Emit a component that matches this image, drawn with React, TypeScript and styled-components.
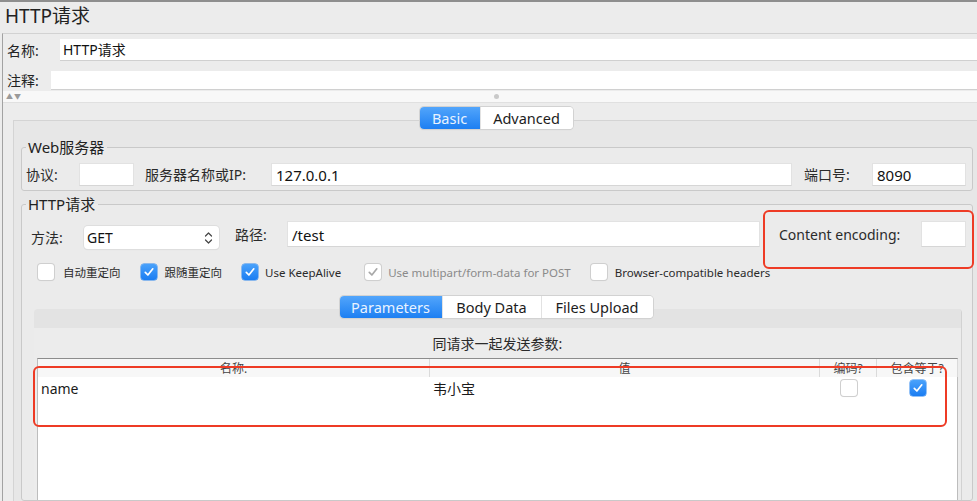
import React from "react";
import styled, { createGlobalStyle } from "styled-components";

const Global = createGlobalStyle`
  html, body { margin: 0; padding: 0; background: #ececec; }
  * { box-sizing: border-box; }
`;

const FONT = `"Noto Sans", "Noto Sans CJK SC", sans-serif`;

const Window = styled.div`
  position: relative;
  width: 977px;
  height: 501px;
  overflow: hidden;
  background: #ececec;
  border-top: 2px solid #8e8e8e;
  font-family: ${FONT};
  color: #1e1e1e;
  display: flex;
  flex-direction: column;
`;

const Title = styled.div`
  height: 31px;
  line-height: 29px;
  padding-left: 5px;
  font-size: 19px;
  color: #222;
`;

const Body = styled.div`
  flex: 1;
  margin-left: 2px;
  border-left: 1px solid #a2a2a2;
  border-top: 1px solid #d2d2d2;
  display: flex;
  flex-direction: column;
  min-height: 0;
`;

const FieldRow = styled.div<{ $pt: number }>`
  display: flex;
  align-items: center;
  padding: ${(p) => p.$pt}px 0 0 4px;
`;

const TopLabel = styled.span<{ $w: number }>`
  width: ${(p) => p.$w}px;
  flex: none;
  font-size: 14px;
  color: #222;
`;

const WideInput = styled.div<{ $h: number }>`
  flex: 1;
  height: ${(p) => p.$h}px;
  background: #fff;
  border-bottom: 1px solid #d0d0d0;
  font-size: 14px;
  line-height: ${(p) => p.$h - 1}px;
  padding-left: 3px;
  color: #111;
`;

const Splitter = styled.div`
  position: relative;
  height: 12px;
  margin-top: 1px;
  background: #f8f8f8;
  border-bottom: 1px solid #e0e0e0;
  display: flex;
  align-items: center;
  justify-content: center;
`;

const Arrows = styled.span`
  position: absolute;
  left: 3px;
  top: 0;
  font-size: 7px;
  line-height: 12px;
  color: #9a9a9a;
  letter-spacing: 1px;
`;

const Dot = styled.span`
  width: 5px;
  height: 5px;
  border-radius: 50%;
  background: #c9c9c9;
  margin-left: 12px;
`;

const TabArea = styled.div<{ $h: number; $pt: number }>`
  height: ${(p) => p.$h}px;
  padding-top: ${(p) => p.$pt}px;
  display: flex;
  justify-content: center;
`;

const Segmented = styled.div<{ $shift: number }>`
  position: relative;
  z-index: 2;
  display: flex;
  height: 22px;
  margin-left: ${(p) => p.$shift}px;
  border-radius: 4px;
  background: #fff;
  box-shadow: 0 0 0 1px #d2d2d2, 0 1px 1px rgba(0, 0, 0, 0.12);
  overflow: hidden;
`;

const Segment = styled.div<{ $w: number; $on?: boolean }>`
  width: ${(p) => p.$w}px;
  display: flex;
  align-items: center;
  justify-content: center;
  font-size: 14.5px;
  color: ${(p) => (p.$on ? "#e9f3ff" : "#1c1c1c")};
  background: ${(p) => (p.$on ? "linear-gradient(#52a5fb, #1d7ff2)" : "#fff")};
  border-right: 1px solid #e2e2e2;
  &:last-child { border-right: none; }
`;

const Panel = styled.div`
  flex: 1;
  margin-left: 10px;
  background: #e7e7e7;
  border-top: 1px solid #d4d4d4;
  border-left: 1px solid #d4d4d4;
  padding: 18px 4px 0 7px;
  display: flex;
  flex-direction: column;
  min-height: 0;
`;

const Group = styled.fieldset<{ $grow?: boolean; $mt: number }>`
  margin: ${(p) => p.$mt}px 0 0 0;
  padding: 0;
  border: 1px solid #c9c9c9;
  border-radius: 3px;
  background: #ebebeb;
  min-width: 0;
  display: flex;
  flex-direction: column;
  ${(p) => (p.$grow ? "flex: 1;" : "")}
`;

const Legend = styled.legend`
  font-size: 15px;
  line-height: 16px;
  padding: 0 3px 0 2px;
  margin-left: 4px;
  color: #222;
`;

const Row = styled.div<{ $pl: number; $pt: number; $pb?: number }>`
  display: flex;
  align-items: flex-start;
  padding: ${(p) => p.$pt}px 6px ${(p) => p.$pb ?? 0}px ${(p) => p.$pl}px;
`;

const Label = styled.span<{ $w: number; $h: number }>`
  flex: none;
  width: ${(p) => p.$w}px;
  height: ${(p) => p.$h}px;
  line-height: ${(p) => p.$h}px;
  font-size: 14px;
  color: #2a2a2a;
  white-space: nowrap;
`;

const Input = styled.div<{ $w?: number; $h: number; $mr?: number }>`
  ${(p) => (p.$w ? `width: ${p.$w}px; flex: none;` : "flex: 1;")}
  height: ${(p) => p.$h}px;
  line-height: ${(p) => p.$h}px;
  margin-right: ${(p) => p.$mr ?? 0}px;
  background: #fff;
  border: 1px solid #e2e2e2;
  border-bottom-color: #d6d6d6;
  padding-left: 4px;
  font-size: 15px;
  color: #111;
  white-space: nowrap;
`;

const Select = styled.div`
  flex: none;
  width: 135px;
  height: 23px;
  margin-top: 5px;
  margin-right: 16px;
  background: #fff;
  border-radius: 4px;
  box-shadow: 0 0 0 1px #dedede, 0 1px 1px rgba(0, 0, 0, 0.1);
  display: flex;
  align-items: center;
  justify-content: space-between;
  padding: 0 6px 0 3px;
  font-size: 14px;
  color: #111;
`;

const CheckRow = styled.div`
  display: flex;
  align-items: center;
  padding: 9px 0 0 16px;
  height: 25px;
  flex: none;
`;

const CheckItem = styled.label<{ $mr: number; $dim?: boolean }>`
  display: flex;
  align-items: center;
  margin-right: ${(p) => p.$mr}px;
  font-size: 11.5px;
  color: ${(p) => (p.$dim ? "#8a8a8a" : "#2a2a2a")};
  white-space: nowrap;
`;

const Box = styled.span<{ $on?: boolean; $dis?: boolean; $gap: number }>`
  flex: none;
  width: 16px;
  height: 16px;
  margin-right: ${(p) => p.$gap}px;
  border-radius: 3px;
  display: flex;
  align-items: center;
  justify-content: center;
  background: ${(p) => (p.$on && !p.$dis ? "linear-gradient(#4aa2fb, #1b7df2)" : "#fff")};
  box-shadow: ${(p) =>
    p.$on && !p.$dis ? "0 0 0 0.5px #2a86ef" : "0 0 0 1px #cfcfcf, 0 1px 1px rgba(0,0,0,0.08)"};
`;

const InnerWrap = styled.div`
  flex: 1;
  display: flex;
  flex-direction: column;
  padding: 16px 10px 0 12px;
`;

const InnerTabs = styled.div`
  display: flex;
  justify-content: center;
  height: 13px;
`;

const InnerPanel = styled.div`
  flex: 1;
  display: flex;
  flex-direction: column;
  background: #ececec;
  border-radius: 4px 4px 0 0;
  border-right: 1px solid #d2d2d2;
  padding: 0 3px 0 3px;
  overflow: hidden;
`;

const InnerStrip = styled.div`
  height: 19px;
  margin: 0 -3px 0 -3px;
  background: #e3e3e3;
`;

const Caption = styled.div`
  height: 30px;
  line-height: 32px;
  text-align: center;
  font-size: 14px;
  color: #2a2a2a;
`;

const Table = styled.div`
  flex: 1;
  background: #fff;
  border-top: 1px solid #8c8c8c;
  border-left: 1px solid #bdbdbd;
  border-right: 1px solid #bdbdbd;
`;

const Grid = styled.div`
  display: grid;
  grid-template-columns: 392px 390px 57px 81px;
`;

const Head = styled.div`
  height: 18px;
  line-height: 20px;
  font-size: 12px;
  color: #444;
  text-align: center;
  background: #f7f7f7;
  border-right: 1px solid #dadada;
  overflow: hidden;
`;

const Cell = styled.div<{ $center?: boolean }>`
  height: 22px;
  display: flex;
  align-items: center;
  justify-content: ${(p) => (p.$center ? "center" : "flex-start")};
  padding-left: ${(p) => (p.$center ? 0 : 3)}px;
  font-size: 14px;
  color: #1a1a1a;
`;

const Highlight = styled.div<{ $x: number; $y: number; $w: number; $h: number }>`
  position: absolute;
  left: ${(p) => p.$x}px;
  top: ${(p) => p.$y}px;
  width: ${(p) => p.$w}px;
  height: ${(p) => p.$h}px;
  border: 2.5px solid #ee3b25;
  border-radius: 6px;
  pointer-events: none;
  z-index: 5;
`;

const Check = ({ color = "#fff" }: { color?: string }) => (
  <svg width="12" height="12" viewBox="0 0 12 12">
    <path d="M2.3 6.4 L4.9 9 L9.8 2.8" fill="none" stroke={color} strokeWidth="1.7" strokeLinecap="round" strokeLinejoin="round" />
  </svg>
);

const Chevrons = () => (
  <svg width="9" height="14" viewBox="0 0 9 14">
    <path d="M1.5 5 L4.5 2 L7.5 5 M1.5 9 L4.5 12 L7.5 9" fill="none" stroke="#444" strokeWidth="1.2" strokeLinecap="round" strokeLinejoin="round" />
  </svg>
);

const CB = ({ on, dis, gap }: { on?: boolean; dis?: boolean; gap: number }) => (
  <Box $on={on} $dis={dis} $gap={gap}>
    {on && <Check color={dis ? "#a8a8a8" : "#fff"} />}
  </Box>
);

export default function App() {
  return (
    <>
      <Global />
      <Window>
        <Title>HTTP请求</Title>
        <Body>
          <FieldRow $pt={5}>
            <TopLabel $w={53}>名称:</TopLabel>
            <WideInput $h={22}>HTTP请求</WideInput>
          </FieldRow>
          <FieldRow $pt={9}>
            <TopLabel $w={44}>注释:</TopLabel>
            <WideInput $h={19} />
          </FieldRow>
          <Splitter>
            <Arrows>▲▼</Arrows>
            <Dot />
          </Splitter>
          <TabArea $h={17} $pt={4}>
            <Segmented $shift={12}>
              <Segment $w={61} $on>Basic</Segment>
              <Segment $w={92}>Advanced</Segment>
            </Segmented>
          </TabArea>
          <Panel>
            <Group $mt={0}>
              <Legend>Web服务器</Legend>
              <Row $pl={4} $pt={8} $pb={4}>
                <Label $w={53} $h={23}>协议:</Label>
                <Input $w={55} $h={23} $mr={11} />
                <Label $w={126} $h={23}>服务器名称或IP:</Label>
                <Input $h={23} $mr={12}>127.0.0.1</Input>
                <Label $w={68} $h={23}>端口号:</Label>
                <Input $w={94} $h={23}>8090</Input>
              </Row>
            </Group>
            <Group $mt={5} $grow>
              <Legend>HTTP请求</Legend>
              <Row $pl={9} $pt={9}>
                <Label $w={53} $h={34}>方法:</Label>
                <Select>
                  <span>GET</span>
                  <Chevrons />
                </Select>
                <Label $w={52} $h={28}>路径:</Label>
                <Input $h={26} $mr={19}>/test</Input>
                <Label $w={142} $h={28}>Content encoding:</Label>
                <Input $w={45} $h={26} />
              </Row>
              <CheckRow>
                <CheckItem $mr={20}><CB gap={9} />自动重定向</CheckItem>
                <CheckItem $mr={20}><CB on gap={8} />跟随重定向</CheckItem>
                <CheckItem $mr={24}><CB on gap={7} />Use KeepAlive</CheckItem>
                <CheckItem $mr={20} $dim><CB on dis gap={7} />Use multipart/form-data for POST</CheckItem>
                <CheckItem $mr={0}><CB gap={8} />Browser-compatible headers</CheckItem>
              </CheckRow>
              <InnerWrap>
                <InnerTabs>
                  <Segmented $shift={-4}>
                    <Segment $w={103} $on>Parameters</Segment>
                    <Segment $w={99}>Body Data</Segment>
                    <Segment $w={111}>Files Upload</Segment>
                  </Segmented>
                </InnerTabs>
                <InnerPanel>
                  <InnerStrip />
                  <Caption>同请求一起发送参数:</Caption>
                  <Table>
                    <Grid>
                      <Head>名称:</Head>
                      <Head>值</Head>
                      <Head>编码?</Head>
                      <Head>包含等于?</Head>
                      <Cell>name</Cell>
                      <Cell>韦小宝</Cell>
                      <Cell $center><CB gap={0} /></Cell>
                      <Cell $center><CB on gap={0} /></Cell>
                    </Grid>
                  </Table>
                </InnerPanel>
              </InnerWrap>
            </Group>
          </Panel>
        </Body>
        <Highlight $x={763} $y={208} $w={211} $h={59} />
        <Highlight $x={33} $y={364} $w={914} $h={61} />
      </Window>
    </>
  );
}
